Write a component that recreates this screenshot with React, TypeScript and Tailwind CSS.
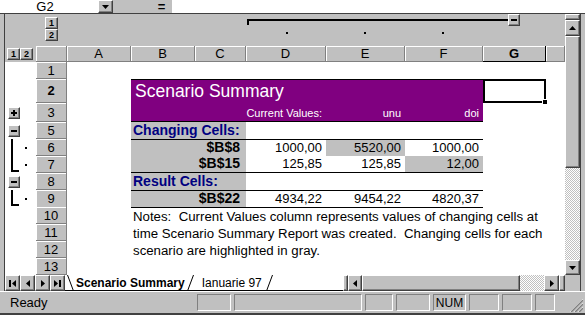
import React from 'react';

// grid columns: outline gutter, row header, A..G, partial H
const COLS = 'grid grid-cols-[31px_31px_64px_64px_51px_80px_79px_78px_63px_19px]';
const raised =
  'bg-[#c0c0c0] border border-t-white border-l-white border-r-[#404040] border-b-[#404040] shadow-[inset_-1px_-1px_0_#808080]';
const sunken = 'border border-t-[#808080] border-l-[#808080] border-r-white border-b-white';
const hdr =
  'bg-[#c0c0c0] border-r border-b border-[#808080] shadow-[inset_1px_1px_0_#fff] flex items-center justify-center text-[13px] leading-none';

type Dir = 'up' | 'down' | 'left' | 'right';

const Tri: React.FC<{ dir: Dir }> = ({ dir }) => {
  const vertical = dir === 'up' || dir === 'down';
  const pts = {
    up: '0,4 7,4 3.5,0',
    down: '0,0 7,0 3.5,4',
    left: '4,0 4,7 0,3.5',
    right: '0,0 0,7 4,3.5',
  }[dir];
  return (
    <svg viewBox={vertical ? '0 0 7 4' : '0 0 4 7'} className={vertical ? 'w-[7px] h-[4px]' : 'w-[4px] h-[7px]'}>
      <polygon points={pts} fill="#000" />
    </svg>
  );
};

const Minus = () => <div className="w-[6px] h-[2px] bg-black" />;
const Plus = () => (
  <div className="relative w-[6px] h-[6px]">
    <div className="absolute left-0 top-[2px] w-[6px] h-[2px] bg-black" />
    <div className="absolute left-[2px] top-0 w-[2px] h-[6px] bg-black" />
  </div>
);

const OutlineBtn: React.FC<{ className: string; children: React.ReactNode }> = ({ className, children }) => (
  <div className={`absolute w-[12px] h-[12px] ${raised} flex items-center justify-center ${className}`}>{children}</div>
);

const LevelBtn: React.FC<{ n: string }> = ({ n }) => (
  <div className={`w-[13px] h-[12px] ${raised} flex items-center justify-center text-[9px] font-bold leading-none`}>{n}</div>
);

const Row: React.FC<{ h: string; label: string; bold?: boolean; gutter?: React.ReactNode; children?: React.ReactNode }> = ({
  h,
  label,
  bold,
  gutter,
  children,
}) => (
  <div className={`${COLS} ${h}`}>
    <div className="relative col-start-1">{gutter}</div>
    <div className={`${hdr} col-start-2 ${bold ? 'font-bold border-[#000]' : ''}`}>{label}</div>
    {children}
  </div>
);

// right-aligned value cell; font size is added per use
const cell = 'flex items-end justify-end pr-[4px] pb-[2px] leading-none whitespace-nowrap';
const num = `${cell} text-[13px]`;
const head = `${cell} text-[11px] text-white bg-[#800080] border-b border-black`;
const label =
  'col-start-4 col-span-2 bg-[#c0c0c0] flex items-end pb-[2px] text-[14px] font-bold leading-none whitespace-nowrap';

const Bracket: React.FC<{ end?: boolean }> = ({ end }) => (
  <>
    <div className={`absolute left-[6px] top-0 w-[2px] ${end ? 'h-[16px]' : 'h-full'} bg-black`} />
    {end && <div className="absolute left-[6px] top-[14px] w-[8px] h-[2px] bg-black" />}
    <div className="absolute left-[20px] top-[8px] w-[2px] h-[2px] bg-black" />
  </>
);

export default function App() {
  const letters = ['A', 'B', 'C', 'D', 'E', 'F', 'G', ''];
  return (
    <div className="w-[585px] h-[315px] overflow-hidden bg-[#c0c0c0] flex flex-col text-black font-['Liberation_Sans',Arial,sans-serif]">
      {/* formula bar */}
      <div className="flex h-[14px] border-b border-[#404040]">
        <div className="w-[98px] bg-white flex items-center justify-center pr-[8px] text-[13px] leading-[13px]">G2</div>
        <div className={`w-[15px] ${raised} flex items-center justify-center`}>
          <Tri dir="down" />
        </div>
        <div className="w-[38px]" />
        <div className="w-[21px] flex items-center justify-center text-[13px] font-bold leading-none">=</div>
        <div className="flex-1 bg-white" />
      </div>

      <div className="flex h-[277px]">
        <div className="w-[4px]" />
        <div className="w-[576px] flex flex-col border-l border-[#404040]">
          <div className="flex h-[261px]">
            {/* sheet */}
            <div className="w-[560px] flex flex-col">
              {/* column outline area */}
              <div className={`${COLS} h-[32px] relative`}>
                <div className="col-start-2 flex flex-col items-center pt-[3px]">
                  <LevelBtn n="1" />
                  <LevelBtn n="2" />
                </div>
                <div className="absolute left-[242px] top-[5px] w-[262px] h-[2px] bg-black" />
                <div className="absolute left-[242px] top-[5px] w-[2px] h-[6px] bg-black" />
                <OutlineBtn className="left-[503px] top-[0px]">
                  <Minus />
                </OutlineBtn>
                <div className="absolute left-[281px] top-[18px] w-[2px] h-[2px] bg-black" />
                <div className="absolute left-[359px] top-[18px] w-[2px] h-[2px] bg-black" />
                <div className="absolute left-[437px] top-[18px] w-[2px] h-[2px] bg-black" />
              </div>
              {/* column headers */}
              <div className={`${COLS} h-[16px]`}>
                <div className="flex items-center pl-[2px]">
                  <LevelBtn n="1" />
                  <LevelBtn n="2" />
                </div>
                <div className={hdr} />
                {letters.map((l, i) => (
                  <div key={i} className={`${hdr} ${l === 'G' ? 'font-bold border-black' : ''}`}>
                    {l}
                  </div>
                ))}
              </div>
              {/* rows */}
              <div className="flex flex-col bg-white">
                <Row h="h-[17px]" label="1" />
                <Row h="h-[24px]" label="2" bold>
                  <div className="col-start-4 col-span-5 bg-[#800080] border-t border-black flex items-center pl-[4px] text-white text-[17.5px] leading-none whitespace-nowrap">
                    Scenario Summary
                  </div>
                  <div className="col-start-9 relative border-2 border-black">
                    <div className="absolute -right-[4px] -bottom-[4px] w-[6px] h-[6px] bg-black border border-white" />
                  </div>
                </Row>
                <Row
                  h="h-[19px]"
                  label="3"
                  gutter={
                    <OutlineBtn className="left-[3px] top-[4px]">
                      <Plus />
                    </OutlineBtn>
                  }
                >
                  <div className="col-start-4 col-span-2 bg-[#800080] border-b border-black" />
                  <div className={head}>Current Values:</div>
                  <div className={head}>unu</div>
                  <div className={head}>doi</div>
                </Row>
                <Row
                  h="h-[17px]"
                  label="5"
                  gutter={
                    <OutlineBtn className="left-[3px] top-[3px]">
                      <Minus />
                    </OutlineBtn>
                  }
                >
                  <div className={`${label} pl-[2px] text-[#000080]`}>Changing Cells:</div>
                </Row>
                <Row h="h-[17px]" label="6" gutter={<Bracket />}>
                  <div className={`${label} justify-end pr-[6px] border-t border-black`}>$B$8</div>
                  <div className={`${num} border-t border-black`}>1000,00</div>
                  <div className={`${num} border-t border-black bg-[#c0c0c0]`}>5520,00</div>
                  <div className={`${num} border-t border-black`}>1000,00</div>
                </Row>
                <Row h="h-[17px]" label="7" gutter={<Bracket end />}>
                  <div className={`${label} justify-end pr-[6px] border-b border-black`}>$B$15</div>
                  <div className={`${num} border-b border-black`}>125,85</div>
                  <div className={`${num} border-b border-black`}>125,85</div>
                  <div className={`${num} border-b border-black bg-[#c0c0c0]`}>12,00</div>
                </Row>
                <Row
                  h="h-[17px]"
                  label="8"
                  gutter={
                    <OutlineBtn className="left-[3px] top-[3px]">
                      <Minus />
                    </OutlineBtn>
                  }
                >
                  <div className={`${label} pl-[2px] text-[#000080]`}>Result Cells:</div>
                </Row>
                <Row h="h-[17px]" label="9" gutter={<Bracket end />}>
                  <div className={`${label} justify-end pr-[6px] border-y border-black`}>$B$22</div>
                  <div className={`${num} border-y border-black`}>4934,22</div>
                  <div className={`${num} border-y border-black`}>9454,22</div>
                  <div className={`${num} border-y border-black`}>4820,37</div>
                </Row>
                {[
                  ['10', 'Notes:  Current Values column represents values of changing cells at'],
                  ['11', 'time Scenario Summary Report was created.  Changing cells for each'],
                  ['12', 'scenario are highlighted in gray.'],
                  ['13', ''],
                ].map(([n, t]) => (
                  <Row key={n} h="h-[17px]" label={n}>
                    <div className="col-start-4 col-span-6 flex items-end pl-[2px] pb-[1px] whitespace-pre text-[13.25px] leading-none">
                      {t}
                    </div>
                  </Row>
                ))}
              </div>
            </div>
            {/* vertical scrollbar */}
            <div className="w-[15px] flex flex-col">
              <div className={`h-[6px] ${raised}`} />
              <div className={`h-[16px] ${raised} flex items-center justify-center`}>
                <Tri dir="up" />
              </div>
              <div className={`h-[132px] ${raised}`} />
              <div className="flex-1 bg-[repeating-conic-gradient(#c0c0c0_0_25%,#ffffff_0_50%)] bg-[length:2px_2px]" />
              <div className={`h-[15px] ${raised} flex items-center justify-center`}>
                <Tri dir="down" />
              </div>
            </div>
          </div>

          {/* sheet tabs + horizontal scrollbar */}
          <div className="flex h-[16px]">
            {(['first', 'left', 'right', 'last'] as const).map((k) => (
              <div key={k} className={`w-[15px] ${raised} flex items-center justify-center gap-[1px]`}>
                {k === 'first' && <div className="w-[2px] h-[7px] bg-black" />}
                <Tri dir={k === 'first' || k === 'left' ? 'left' : 'right'} />
                {k === 'last' && <div className="w-[2px] h-[7px] bg-black" />}
              </div>
            ))}
            <div className="w-[278px] bg-white flex items-center border-b border-black">
              <svg viewBox="0 0 7 16" className="w-[7px] h-[16px] ml-[2px]">
                <line x1="0.5" y1="0" x2="6.5" y2="16" stroke="#000" />
              </svg>
              <div className="text-[12px] font-bold leading-none px-[2px] whitespace-nowrap">Scenario Summary</div>
              <svg viewBox="0 0 7 16" className="w-[7px] h-[16px]">
                <line x1="0.5" y1="16" x2="6.5" y2="0" stroke="#000" />
              </svg>
              <div className="text-[12px] leading-none pl-[8px] pr-[4px] whitespace-nowrap">Ianuarie 97</div>
              <svg viewBox="0 0 7 16" className="w-[7px] h-[16px]">
                <line x1="0.5" y1="16" x2="6.5" y2="0" stroke="#000" />
              </svg>
            </div>
            <div className={`w-[5px] ${raised}`} />
            <div className={`w-[14px] ${raised} flex items-center justify-center`}>
              <Tri dir="left" />
            </div>
            <div className={`w-[158px] ${raised}`} />
            <div className="w-[24px] bg-[repeating-conic-gradient(#c0c0c0_0_25%,#ffffff_0_50%)] bg-[length:2px_2px]" />
            <div className={`w-[15px] ${raised} flex items-center justify-center`}>
              <Tri dir="right" />
            </div>
            <div className={`w-[6px] ${raised}`} />
            <div className="w-[15px]" />
          </div>
        </div>
        <div className="w-[5px] border-l border-[#404040]" />
      </div>

      {/* status bar */}
      <div className="h-[24px] flex items-center border-t border-white border-b-2 border-b-[#404040] pr-[2px]">
        <div className="w-[197px] pl-[10px] text-[13px] leading-none">Ready</div>
        <div className="flex gap-[3px] h-[17px]">
          <div className={`w-[34px] ${sunken}`} />
          <div className={`w-[128px] ${sunken}`} />
          <div className={`w-[28px] ${sunken}`} />
          <div className={`w-[34px] ${sunken}`} />
          <div className={`w-[33px] ${sunken} flex items-center justify-center text-[12px] leading-none`}>NUM</div>
          <div className={`w-[30px] ${sunken}`} />
          <div className={`w-[30px] ${sunken}`} />
          <div className={`w-[20px] ${sunken}`} />
        </div>
        <svg viewBox="0 0 16 16" className="ml-auto w-[16px] h-[16px] self-end mb-[1px]">
          {[3, 7, 11].map((o) => (
            <g key={o}>
              <line x1={o} y1="16" x2="16" y2={o} stroke="#fff" />
              <line x1={o + 1} y1="16" x2="16" y2={o + 1} stroke="#808080" strokeWidth="1.5" />
            </g>
          ))}
        </svg>
      </div>
    </div>
  );
}
